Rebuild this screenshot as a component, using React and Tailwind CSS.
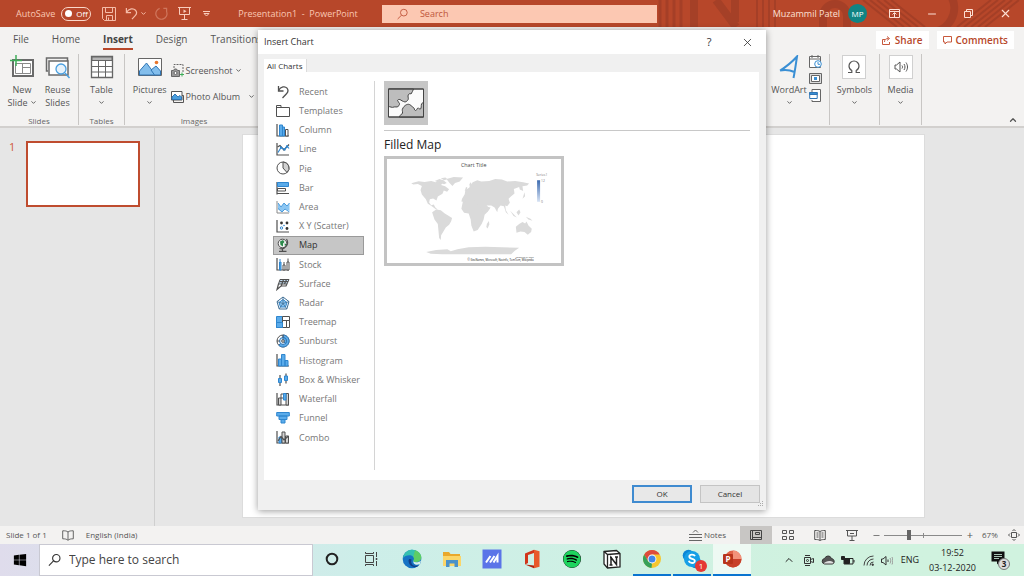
import { useState } from 'react';
import { FaWindows, FaSpotify } from 'react-icons/fa';
import { FiChevronDown, FiChevronUp, FiX, FiMinus } from 'react-icons/fi';

const BLUE = '#5aabea';
const DARK = '#505050';

// ---------- chart category icons ----------

function Svg({ size = 14, children, className = '', box = 14 }) {
  return (
    <svg
      width={size}
      height={size}
      viewBox={`0 0 ${box} ${box}`}
      fill="none"
      stroke={DARK}
      strokeWidth="1"
      className={`shrink-0 ${className}`}
      aria-hidden="true"
    >
      {children}
    </svg>
  );
}

const axis = <path d="M1 1v12h12" strokeWidth="1.200" />;

const chartTypes = [
  {
    name: 'Recent',
    icon: <path d="M2.500 1v5h5M2.500 5.500C5 1.500 9 .8 11 3.200c1.600 2 1 4-.5 5.600L6.500 13" strokeWidth="1.300" />,
  },
  {
    name: 'Templates',
    icon: <path d="M.5 12.500V1.500h4.500v2H13.500v9zM.5 3.500h4.500" />,
  },
  {
    name: 'Column',
    icon: (
      <>
        <path d="M1 1v12h12" strokeWidth="1.200" />
        <path d="M3.500 2h3V13h-3z" fill={BLUE} stroke="#2f86cf" />
        <path d="M6.500 4h2v9h-2z" fill={BLUE} stroke="#2f86cf" />
        <path d="M9.500 6.500h2.500V13H9.500z" fill="#fff" />
      </>
    ),
  },
  {
    name: 'Line',
    icon: (
      <>
        {axis}
        <path d="M1.500 5 4 3.500 8 8 13 2.500" strokeWidth="1.200" />
        <path d="M2 10.500 5 5.500 8.500 7.500 11 4 13 6.500" stroke="#2f86cf" strokeWidth="1.200" />
        <path d="M4 4.500h2v2H4zM7.500 6.500h2v2h-2zM10 3.500h2v2h-2z" fill="#2f86cf" stroke="none" />
      </>
    ),
  },
  {
    name: 'Pie',
    icon: (
      <>
        <circle cx="7" cy="7" r="6" fill="#fff" />
        <path d="M7 1v6l4 4.500A6 6 0 0 0 7 1z" fill="#d0d0d0" />
      </>
    ),
  },
  {
    name: 'Bar',
    icon: (
      <>
        <path d="M1 1v12.500" strokeWidth="1.200" />
        <path d="M1.500 1.500h11v4h-11z" fill={BLUE} stroke="#2f86cf" />
        <path d="M1.500 7.500h8v2.500h-8zM1 12.500H13" />
      </>
    ),
  },
  {
    name: 'Area',
    icon: (
      <>
        <path d="M2 3l3 4 3-4 3 3 2.500-3v8L9 9l-3 3-4-3z" fill="#8cc6f2" stroke="none" />
        <path d="M2 3l3 4 3-4 3 3 2.500-3M2 8.500l4 3.500 3-3 4.500 3" stroke="#4b9bdc" />
        <path d="M1 1v12h12" stroke="#8a8a8a" />
      </>
    ),
  },
  {
    name: 'X Y (Scatter)',
    icon: (
      <>
        {axis}
        <g fill="#333" stroke="none">
          <circle cx="5.500" cy="4" r="1.400" />
          <circle cx="11" cy="4" r="1.400" />
          <circle cx="11" cy="9.500" r="1.400" />
        </g>
        <circle cx="5.500" cy="9" r="1.200" stroke="#2f86cf" />
        <circle cx="8" cy="6.500" r=".8" fill="#2f86cf" stroke="none" />
      </>
    ),
  },
  {
    name: 'Map',
    icon: (
      <>
        <circle cx="6.500" cy="5.500" r="4.300" fill="#f4f4f4" />
        <path d="M4 3.500 7 2l1.500 2L7 5.500v3L4.500 7z" fill="#2b8a4b" stroke="none" />
        <path d="M8.500 5.500 10.500 6 9 8.500z" fill="#2b8a4b" stroke="none" />
        <path d="M10.500 1a6.300 6.300 0 0 1-7 9.500M6.500 11v2M3 13.300h7.500" strokeWidth="1.200" />
      </>
    ),
  },
  {
    name: 'Stock',
    icon: (
      <>
        {axis}
        <path d="M4 4.500V2M3.500 5H5v8H3.500z" fill={BLUE} stroke="#2f86cf" />
        <path d="M7 8h2v5H7zM8 8V5M11 5h2v8h-2zM12 5V1.500" fill="#fff" />
      </>
    ),
  },
  {
    name: 'Surface',
    icon: (
      <>
        <path d="M4 2.500h9l-2 4.500H2.500z" fill="#c4dff4" />
        <path d="M7.500 2.500 5 9.500M10.500 2.500l-2 4.500M3.500 4.700h8.500M2.500 7 1 12.500 5 9h5l1-2" strokeWidth="1.200" />
      </>
    ),
  },
  {
    name: 'Radar',
    icon: (
      <>
        <path d="M7 1l6 4.600L10.800 13H3.200L1 5.600z" fill="#fff" stroke="#3d6d94" />
        <path d="M7 3.500 11 6.500 9.500 11h-5L3 6.500z" fill="#8cc6f2" stroke="#2f86cf" />
        <path d="M7 1v6.500L13 5.600M7 7.500l3.800 5.500M7 7.500 3.200 13M7 7.500 1 5.600" stroke="#3d6d94" strokeWidth=".8" />
      </>
    ),
  },
  {
    name: 'Treemap',
    icon: (
      <>
        <path d="M.5 1.500h6v11h-6z" fill={BLUE} stroke="#2f86cf" />
        <path d="M6.500 1.500h7v4h-7zM6.500 5.500h4v7h-4zM10.500 5.500h3v7h-3z" fill="#fff" />
        <path d="M.5 7.500h6v5h-6z" fill={BLUE} stroke="#2f86cf" />
      </>
    ),
  },
  {
    name: 'Sunburst',
    icon: (
      <>
        <circle cx="7" cy="7" r="6" fill="#fff" />
        <path d="M7 1a6 6 0 1 1-4.200 10.200L7 7z" fill={BLUE} stroke="#2f75b5" />
        <circle cx="7" cy="7" r="3.500" fill="#cfe6f8" stroke="#2f75b5" />
        <path d="M7 3.500A3.500 3.500 0 0 1 9.500 9.500L7 7z" fill={BLUE} stroke="#2f75b5" />
        <circle cx="7" cy="7" r="1.300" fill="#fff" />
        <path d="M3.500 7H1M7 3.500V1" />
      </>
    ),
  },
  {
    name: 'Histogram',
    icon: (
      <>
        {axis}
        <path d="M2.500 6h3v7h-3zM5.500 1.500h3.500V13H5.500zM9 7.500h3V13H9z" fill={BLUE} stroke="#2f86cf" />
      </>
    ),
  },
  {
    name: 'Box & Whisker',
    icon: (
      <>
        <path d="M4 2v11M10 .5v10" strokeWidth="1.200" />
        <path d="M2.500 5.500h3v4h-3zM8.500 3h3v4.500h-3z" fill={BLUE} stroke="#2f86cf" />
      </>
    ),
  },
  {
    name: 'Waterfall',
    icon: (
      <>
        {axis}
        <path d="M2.500 6h2.500v7H2.500zM10 1.500h2.500V13H10z" fill="#d4d4d4" />
        <path d="M5 2h3v4H5z" />
        <path d="M7.500 1.500H10V8H7.500z" fill={BLUE} stroke="#2f86cf" />
      </>
    ),
  },
  {
    name: 'Funnel',
    icon: (
      <path
        d="M.7 1.500h12.600V5H.7zM3 5h8v3.500H3zM5 8.500h4V12H5z"
        fill={BLUE}
        stroke="#2f86cf"
      />
    ),
  },
  {
    name: 'Combo',
    icon: (
      <>
        {axis}
        <path d="M3 7h2.500v6H3z" fill={BLUE} stroke="#2f86cf" />
        <path d="M6 2h3v11H6zM9.500 6h3v7h-3z" fill="#d4d4d4" />
        <path d="M2 11 5 6.500 8 10l4.500-4" strokeWidth="1.200" />
      </>
    ),
  },
];

// ---------- title bar ----------

function TitlePattern() {
  return (
    <svg
      className="absolute inset-y-0 right-0 h-full w-[369px]"
      viewBox="0 0 369 27"
      preserveAspectRatio="none"
      fill="none"
      stroke="#983a25"
      aria-hidden="true"
    >
      <g strokeWidth="3" opacity=".55">
        <path d="M5 0v27M12 0v27M19 0v27M26 0v27" />
        <path d="M102 0v27M108 0v27M114 0v27M120 0v27" strokeWidth="2" />
      </g>
      <g strokeWidth="8" opacity=".55">
        <path d="M39 0v27M61 0l20 27M80 0v22" />
        <path d="M168 27V16a12 12 0 0 1 24 0v11" />
        <path d="M276 32a24 24 0 0 0 20-36" />
      </g>
      <g strokeWidth="2" opacity=".6">
        <path d="M208 0l34 27M215 0l34 27M222 0l34 27M229 0l34 27M236 0l34 27" />
        <path d="M302 27 336 0M309 27 343 0M316 27 350 0M323 27 357 0M330 27 364 0" />
      </g>
    </svg>
  );
}

function TitleBar() {
  const tool = 'flex items-center justify-center';
  return (
    <header className="relative grid h-[27px] grid-cols-[382fr_275fr_367fr] items-center bg-[#b7472a] text-[9px] text-[#fbc8b4]">
      <TitlePattern />
      <div className="relative flex items-center pl-4 whitespace-nowrap">
        <span id="autosave">AutoSave</span>
        <button
          role="switch"
          aria-checked="false"
          aria-labelledby="autosave"
          className="ml-1.5 flex h-[14px] w-[30px] items-center gap-1 rounded-full border border-[#fbd8ca] pl-[3px] text-[8px] text-white"
        >
          <span className="size-[7px] rounded-full bg-white" />
          Off
        </button>
        <button aria-label="Save" className={`${tool} ml-[11px]`}>
          <svg width="14" height="14" viewBox="0 0 14 14" fill="none" stroke="#f5bca8">
            <path d="M.5.500h13v13H2.500L.5 11.500zM3.500 1v4.500h7V1M4.500 13V8.500h6V13M6.500 10.500V13" />
          </svg>
        </button>
        <button aria-label="Undo" className={`${tool} ml-[9px]`}>
          <svg width="13" height="13" viewBox="0 0 14 14" fill="none" stroke="#f5bca8" strokeWidth="1.300">
            <path d="M1.500 1v5h5M1.500 5.800C4.500 1.500 9 1 11.300 3.500c1.800 2 1.200 4.200-.3 5.800L7.500 13" />
          </svg>
        </button>
        <FiChevronDown className="ml-0.5" size={7} strokeWidth={3} aria-hidden="true" />
        <button aria-label="Redo" className={`${tool} ml-2 opacity-40`}>
          <svg width="13" height="13" viewBox="0 0 14 14" fill="none" stroke="#f5bca8" strokeWidth="1.300">
            <path d="M9 1.500h3.500V5M12.500 5A6 6 0 1 1 5 1.500" />
          </svg>
        </button>
        <button aria-label="Start slide show" className={`${tool} ml-[10px]`}>
          <svg width="13" height="13" viewBox="0 0 13 13" fill="none" stroke="#f9cdbd">
            <path d="M0 .5h13M1.500 1v6.500h10V1M6.500 7.500V12M3.500 12.500h6" />
            <path d="M5.500 2.500v3.500l3-1.700z" fill="#f9cdbd" stroke="none" />
          </svg>
        </button>
        <button aria-label="Customize toolbar" className={`${tool} ml-3`}>
          <svg width="7" height="6" viewBox="0 0 7 6" fill="none" stroke="#f9cdbd">
            <path d="M0 .5h7M1 2.500h5L3.500 5z" />
          </svg>
        </button>
        <span className="ml-7">Presentation1 &nbsp;-&nbsp; PowerPoint</span>
      </div>
      <label className="relative flex h-[18px] items-center bg-[#fcc8b2] pl-[15px] text-[#c0563b]">
        <svg width="12" height="12" viewBox="0 0 12 12" fill="none" stroke="#c0563b">
          <circle cx="7.500" cy="4.500" r="3.700" />
          <path d="M5 7.300.7 11.500" />
        </svg>
        <input
          type="search"
          placeholder="Search"
          aria-label="Search"
          className="ml-3 w-full bg-transparent outline-none placeholder:text-[#c0563b]"
        />
      </label>
      <div className="relative flex items-center justify-end pr-3">
        <span className="text-[#fde0d5]">Muzammil Patel</span>
        <span className="ml-2 flex size-[19px] items-center justify-center rounded-full bg-[#108484] text-[8px] text-white">
          MP
        </span>
        <button aria-label="Ribbon display options" className="ml-[22px]">
          <svg width="11" height="9" viewBox="0 0 11 9" fill="none" stroke="#fde0d5">
            <path d="M.5.5h10v8H.5zM.5 2.500h10M5.500 8V4M3.500 5.500l2-2 2 2" />
          </svg>
        </button>
        <button aria-label="Minimize" className="ml-[26px] text-[#fde0d5]">
          <FiMinus size={12} />
        </button>
        <button aria-label="Restore" className="ml-[26px]">
          <svg width="9" height="9" viewBox="0 0 9 9" fill="none" stroke="#fde0d5">
            <path d="M.5 2.500h6v6h-6zM2.500 2.500v-2h6v6h-2" />
          </svg>
        </button>
        <button aria-label="Close" className="ml-[26px] text-[#fde0d5]">
          <FiX size={13} />
        </button>
      </div>
    </header>
  );
}

// ---------- ribbon ----------

function RibbonButton({ icon, lines, arrow }) {
  return (
    <button className="flex flex-col items-center text-[9px] leading-[13px]">
      <span className="mb-[3px] flex h-[26px] items-center">{icon}</span>
      {lines.map((line, i) => (
        <span key={line} className="flex items-center gap-0.5 whitespace-nowrap">
          {line}
          {arrow === 'inline' && i === lines.length - 1 && <FiChevronDown size={7} strokeWidth={3} />}
        </span>
      ))}
      {arrow === 'below' && <FiChevronDown className="mt-[3px]" size={7} strokeWidth={3} />}
    </button>
  );
}

function RibbonGroup({ label, children, className = '' }) {
  return (
    <section className={`relative flex h-[71px] flex-col border-r border-[#c8c6c4] ${className}`}>
      <div className="flex flex-1 items-start justify-center gap-2">{children}</div>
      {label && <h2 className="text-center text-[8px] leading-[8px] text-[#666]">{label}</h2>}
    </section>
  );
}

function Ribbon() {
  return (
    <div className="flex items-start justify-between border-b-2 border-[#d2d0ce] bg-[#f3f2f1] pt-px pb-px text-[#555]">
      <div className="flex">
        <RibbonGroup label="Slides" className="w-[79px]">
          <RibbonButton
            lines={['New', 'Slide']}
            arrow="inline"
            icon={
              <svg width="26" height="24" viewBox="0 0 26 24" fill="none" stroke="#6a6a6a">
                <path d="M4 5h20v16H4z" fill="#fff" strokeWidth="2" />
                <path d="M6.500 8.500h15v10h-15zM13.500 9v10M13.500 12.500H22" stroke="#8a8a8a" />
                <path d="M7 0v11M1 5.500h12" stroke="#3fae5a" strokeWidth="1.500" />
              </svg>
            }
          />
          <RibbonButton
            lines={['Reuse', 'Slides']}
            icon={
              <svg width="26" height="24" viewBox="0 0 26 24" fill="none" stroke="#6a6a6a">
                <path d="M3 16H1.500V3h21v3" strokeWidth="1.500" />
                <path d="M4 6h19v14H4z" fill="#fff" strokeWidth="1.500" />
                <circle cx="16" cy="14" r="5" fill="#e6f2fb" stroke="#4a9fdf" strokeWidth="1.300" />
                <path d="m20 18 4.500 5" stroke="#4a9fdf" strokeWidth="1.500" />
              </svg>
            }
          />
        </RibbonGroup>
        <RibbonGroup label="Tables" className="w-[46px]">
          <RibbonButton
            lines={['Table']}
            arrow="below"
            icon={
              <svg width="24" height="24" viewBox="0 0 24 24" fill="none" stroke="#666">
                <path d="M1.500 1.500h21v21h-21z" fill="#fff" strokeWidth="1.300" />
                <path d="M2 2h20v3.500H2z" fill="#b5b5b5" />
                <path d="M1.500 11.500h21M1.500 17h21M8.500 5v17.500M15.500 5v17.500" />
              </svg>
            }
          />
        </RibbonGroup>
        <RibbonGroup label="Images" className="w-[139px]">
          <RibbonButton
            lines={['Pictures']}
            arrow="below"
            icon={
              <svg width="24" height="20" viewBox="0 0 24 20" fill="none" stroke="#666">
                <path d="M.5 1.500h23v17H.5z" fill="#fff" />
                <path d="M1.500 14 8.500 6l9 12h-16z" fill="#83beec" stroke="#2f75b5" />
                <path d="m13 13 5-4 4.500 5v4h-6z" fill="#83beec" stroke="#2f75b5" />
                <circle cx="18.500" cy="5.500" r="1.800" fill="#e8762c" stroke="none" />
              </svg>
            }
          />
          <div className="-ml-1 flex flex-col gap-[13px] pt-[10px] text-[9px] leading-[13px]">
            <button className="flex items-center gap-0.5 whitespace-nowrap">
              <svg width="13" height="13" viewBox="0 0 13 13" fill="none" stroke="#666">
                <path d="M3 4V.5h9V8" strokeDasharray="2 1" />
                <path d="M.5 6.500h2l1-1.500h2l1 1.500h2v6h-8z" fill="#999" />
                <circle cx="4.500" cy="9" r="1.500" fill="#fff" />
                <path d="M11 8.500v4M9 10.500h4" stroke="#3fae5a" />
              </svg>
              Screenshot
              <FiChevronDown size={7} strokeWidth={3} />
            </button>
            <button className="flex items-center gap-0.5 whitespace-nowrap">
              <svg width="13" height="12" viewBox="0 0 13 12" fill="none" stroke="#555">
                <path d="M2.500 9v2.500h10v-7H11" />
                <path d="M.5.5h10.500v8.500H.5z" fill="#fff" />
                <path d="m1 6 3-3 3 3 2-1.500 1.500 1.500v2.500H1z" fill="#4a9fdf" stroke="#2f75b5" />
              </svg>
              Photo Album
              <FiChevronDown className="ml-1.5" size={7} strokeWidth={3} />
            </button>
          </div>
        </RibbonGroup>
      </div>

      <div className="flex flex-1 justify-end">
        <RibbonGroup className="w-[66px]">
          <RibbonButton
            lines={['WordArt']}
            arrow="below"
            icon={
              <svg width="20" height="24" viewBox="0 0 20 24" fill="none" stroke="#3a8fd4" strokeWidth="2">
                <path d="M1 15.500C7 12 13 7 18 1.500 17 8 16 16 14.500 23M1 15.500c5-1 10-.5 14.500 1.500" />
              </svg>
            }
          />
          <div className="-ml-1.5 flex flex-col gap-[5px] pt-px">
            <button aria-label="Date and time">
              <svg width="13" height="13" viewBox="0 0 13 13" fill="none" stroke="#666">
                <path d="M.5 1.500h11v11H.5zM.5 4h11M3 0v3M9 0v3" fill="#fff" />
                <circle cx="9" cy="9" r="3.300" fill="#fff" stroke="#3a8fd4" />
                <path d="M9 7v2.300h2" stroke="#3a8fd4" />
              </svg>
            </button>
            <button aria-label="Slide number">
              <svg width="13" height="11" viewBox="0 0 13 11" fill="none" stroke="#666">
                <path d="M.5.5h12v10H.5z" fill="#ddd" />
                <path d="M2.500 2.500h8v6h-8z" fill="#fff" />
                <path d="M5 4h3v3H5z" fill="#3a8fd4" stroke="none" />
              </svg>
            </button>
            <button aria-label="Object">
              <svg width="13" height="13" viewBox="0 0 13 13" fill="none" stroke="#666">
                <path d="M3 3V.5h8.500v12H3V11" fill="#fff" />
                <path d="M.7 3.500h7.500v6H.7z" fill="#fff" stroke="#2f75b5" />
                <path d="M.7 3.500h7.500v2H.7z" fill="#3a8fd4" stroke="#2f75b5" />
              </svg>
            </button>
          </div>
        </RibbonGroup>
        <RibbonGroup className="w-[50px]">
          <RibbonButton
            lines={['Symbols']}
            arrow="below"
            icon={
              <span className="flex size-[24px] items-center justify-center border border-[#d0d0d0] bg-white">
                <svg width="14" height="14" viewBox="0 0 14 14" fill="none" stroke="#555" strokeWidth="1.200">
                  <path d="M1 12.500h3.800v-2C2.800 9.500 2 8 2 6a5 5 0 0 1 10 0c0 2-.8 3.500-2.800 4.500v2H13" />
                </svg>
              </span>
            }
          />
        </RibbonGroup>
        <RibbonGroup className="w-[42px]">
          <RibbonButton
            lines={['Media']}
            arrow="below"
            icon={
              <span className="flex size-[24px] items-center justify-center border border-[#d0d0d0] bg-white">
                <svg width="14" height="12" viewBox="0 0 14 12" fill="none" stroke="#555">
                  <path d="M1 4v4h1.500l3.500 3V1L2.500 4z" />
                  <path d="M8 4.500c.7 1 .7 2 0 3M10 3c1.300 2 1.300 4 0 6M12 1.500c2 3 2 6 0 9" />
                </svg>
              </span>
            }
          />
        </RibbonGroup>
        <button aria-label="Collapse the ribbon" className="ml-[86px] self-end pr-1.5">
          <FiChevronUp size={10} strokeWidth={3} />
        </button>
      </div>
    </div>
  );
}

function TabRow() {
  const tabs = ['File', 'Home', 'Insert', 'Design', 'Transitions'];
  const action = 'flex h-[18px] items-center gap-1 bg-white px-1.5 text-[10px] font-semibold text-[#b7472a]';
  return (
    <nav className="flex h-[26px] items-center justify-between bg-[#f3f2f1] pr-[10px] pl-[13px] text-[10px] text-[#555]">
      <div className="flex gap-[23px]">
        {tabs.map((tab) => (
          <a
            key={tab}
            href={`#${tab.toLowerCase()}`}
            className={
              tab === 'Insert'
                ? 'border-b-2 border-[#b7472a] leading-[17px] font-bold text-[#444]'
                : 'border-b-2 border-transparent leading-[17px]'
            }
          >
            {tab}
          </a>
        ))}
      </div>
      <div className="flex gap-2">
        <button className={action}>
          <svg width="9" height="9" viewBox="0 0 9 9" fill="none" stroke="#c8593d">
            <path d="M3 3.500H.5v5h7V6M2.500 6c0-2.500 1.500-3.500 4-3.500M5 .5l2.500 2L5 4.500" />
          </svg>
          Share
        </button>
        <button className={action}>
          <svg width="9" height="9" viewBox="0 0 9 9" fill="none" stroke="#c8593d">
            <path d="M.5.500h8v5.500H4L2 8V6H.5z" />
          </svg>
          Comments
        </button>
      </div>
    </nav>
  );
}

// ---------- dialog ----------

function MapPreview() {
  return (
    <svg viewBox="34 252 524 314" className="block w-full" aria-label="Filled map preview" role="img">
      <g fill="#dadada">
        <path d="M107 325l22-6 18 2 20-3 14 4 8-5 14 5-6 8 12 4 12 9-6 8-10-4-4 10-14 8-4 12-10-6-10 2-2 10 6 8 8-2 4 8 8 8-6-2-14-10-10-6-6-14-12-14-4-14 4-12-12-6-14 2z" />
        <path d="M178 318l14-6 12 4 10 8-8 4-12-4zM196 310l14-2 6 5-10 3zM213 312l22-6 28 2-10 12-14 4-8 9-8-8z" />
        <path d="M170 412l12-8 14 2 12 10 10 6 12 8-3 10-6 10-10 8-8 14-6 10-1 14-5-6-2-22-2-20-10-14-4-12z" />
        <path d="M262 382l8-12 18-2 16 4 14 2 10 14 4 8 14 2-8 12-10 10-3 14-6 14-12 18-12 4-7-18-2-18-6-18-14-2-8-12z" />
        <path d="M335 447l6-8 1 10-5 12-4-4z" />
        <path d="M268 358l2-12 12-8 10-16 14-6 12 4 24-2 18-6 20 2 16 6 24-2 24 4 18 4-6 6-14 2 2 14-10-4-2-8-16 6 2 14-10 8-8 8 4 12-8 10-6-2 2 14 8 14-8-8-6-18-10-2-8 10-2 10-8-14-10-6-14 0 10 8-8 10-12 6-10-18-8-10-16 2-2-8 12-4-10-8-14 4-8 8-10-2 2-8z" />
        <path d="M282 328l4-6 4 8-6 10zM272 336l4 2-2 8-6 2zM448 352l2 12-8 8 2-6z" />
        <path d="M405 408l12 12 8 8-10-4zM424 412l8-8 4 8-6 10zM452 426l14 6 6 6-12-4z" />
        <path d="M422 456l10-8 10-6 8 4 4-6 6 12 10 10-2 10-10 8-10-8-12-2-12 4z" />
        <path d="M152 532l30-6 34-2 10 6 20-6 34-6 50-2 50 2 52 1-14 10-10 10H200l-34-2z" />
      </g>
      <text x="295" y="275" textAnchor="middle" fontSize="16" fill="#444">Chart Title</text>
      <text x="500" y="302" textAnchor="middle" fontSize="10" fill="#777">Series1</text>
      <defs>
        <linearGradient id="scale" x1="0" y1="0" x2="0" y2="1">
          <stop offset="0" stopColor="#3c6bb0" />
          <stop offset="1" stopColor="#d9e4f4" />
        </linearGradient>
      </defs>
      <rect x="486" y="316" width="9" height="65" fill="url(#scale)" />
      <text x="498" y="322" fontSize="10" fill="#777">12</text>
      <text x="498" y="385" fontSize="10" fill="#777">0</text>
      <text x="476" y="551" textAnchor="end" fontSize="7" fill="#444">Powered by Bing</text>
      <text x="476" y="558" textAnchor="end" fontSize="8" fill="#222">
        © GeoNames, Microsoft, Navinfo, TomTom, Wikipedia
      </text>
    </svg>
  );
}

function InsertChartDialog() {
  const [selected, setSelected] = useState('Map');

  return (
    <div
      role="dialog"
      aria-labelledby="dialog-title"
      className="flex h-[480px] w-[508px] flex-col bg-[#f0f0f0] text-[#333] shadow-[0_1px_7px_rgba(0,0,0,0.4)]"
    >
      <div className="flex h-[24px] items-center bg-white pl-1.5">
        <h1 id="dialog-title" className="flex-1 text-[9px]">Insert Chart</h1>
        <button aria-label="Help" className="w-[38px] text-[11px]">?</button>
        <button aria-label="Close dialog" className="flex w-[38px] justify-center">
          <FiX size={13} strokeWidth={1.5} />
        </button>
      </div>
      <div className="flex h-[18px] items-end pl-1.5" role="tablist">
        <button
          role="tab"
          aria-selected="true"
          className="h-[13px] border-r border-[#dcdcdc] bg-white px-[3px] text-[8px] leading-[13px]"
        >
          All Charts
        </button>
      </div>
      <div className="mr-[7px] ml-1.5 flex flex-1 bg-white pt-[9px] pb-[10px]">
        <ul className="flex w-[111px] flex-col border-r border-[#d4d4d4] pt-px pr-[10px] pb-[23px] pl-[9px]">
          {chartTypes.map(({ name, icon }) => (
            <li key={name} className="flex flex-1">
              <button
                onClick={() => setSelected(name)}
                className={`flex w-full items-center gap-[9px] border pl-[2px] text-left text-[9px] whitespace-nowrap ${
                  selected === name
                    ? 'border-[#9a9a9a] bg-[#c6c6c6] text-[#333]'
                    : 'border-transparent text-[#777]'
                }`}
              >
                <Svg>{icon}</Svg>
                {name}
              </button>
            </li>
          ))}
        </ul>
        <div className="flex-1 pr-[9px] pl-[9px]">
          <div className="border-b border-[#c8c8c8] pb-[5px]">
            <button aria-label="Filled Map" className="flex size-[44px] items-center justify-center bg-[#c6c6c6]">
              <svg width="36" height="30" viewBox="0 0 36 30" stroke="#444" strokeWidth="1">
                <path d="M.5 1h35v28H.5z" fill="#fbfbfb" />
                <path
                  d="M.5 1H25.500C25 3 24 4 23 6c-1-1-3 0-3 2 0 1.500 1 3-.5 4.500-1 1-2 2-4 1-2-.5-3-2.500-5-2-1.500.5-1 2 .5 3 1 1 .5 3-1 4-1 1-3 0-4 .5C4 20 2 18.500.5 18.500z"
                  fill="#bdbdbd"
                />
                <path
                  d="M11.500 29c-.5-2 2.500-2 3-4 .3-2-1-3 .5-5 1-2 4-4.500 6.500-3.500 2 .5 2 2.500 4 3 1 .5.5 2.500 2 3 1.500 0 1-2 2.500-2.500 1-.5 1 1.500 2.500 1 1-1 .5-3 1-5 .5-1 1.500-1 2-2v15z"
                  fill="#bdbdbd"
                />
                <path d="M.5 1h35v28H.5z" fill="none" />
              </svg>
            </button>
          </div>
          <h2 className="pt-1 pb-px text-[12px] leading-[20px] text-[#222]">Filled Map</h2>
          <div className="w-[180px] border-3 border-[#c3c3c3]">
            <MapPreview />
          </div>
        </div>
      </div>
      <div className="relative flex h-[30px] items-center justify-end gap-2 pr-1.5 pb-0.5 text-[8px]">
        <button className="h-[18px] w-[60px] border-2 border-[#3f8bd0] bg-[#e8e8e8]">OK</button>
        <button className="h-[18px] w-[60px] border border-[#c4c4c4] bg-[#e4e4e4]">Cancel</button>
        <svg className="absolute right-0.5 bottom-0.5" width="7" height="7" viewBox="0 0 7 7" fill="#aaa" aria-hidden="true">
          <path d="M5 0h1v1H5zM3 2h1v1H3zM5 2h1v1H5zM1 4h1v1H1zM3 4h1v1H3zM5 4h1v1H5z" />
        </svg>
      </div>
    </div>
  );
}

// ---------- workspace and bars ----------

function Workspace() {
  return (
    <main className="flex flex-1 bg-[#e6e6e6]">
      <aside className="flex w-[155px] items-start gap-[11px] border-r border-[#cfcfcf] pt-[13px] pl-[9px] text-[11px] leading-[12px] text-[#d0583a]">
        1
        <button aria-label="Slide 1" className="h-[66px] w-[114px] border-2 border-[#bf4c2f] bg-white" />
      </aside>
      <div className="flex flex-1 pt-1.5 pr-[99px] pb-2 pl-[87px]">
        <div className="flex-1 border border-[#dcdcdc] bg-white" />
      </div>
    </main>
  );
}

function StatusBar() {
  const [zoom, setZoom] = useState(67);
  return (
    <footer className="flex h-[18px] items-center bg-[#f3f2f1] pr-1 pl-1.5 text-[8px] text-[#555]">
      <span>Slide 1 of 1</span>
      <svg className="ml-[15px]" width="12" height="11" viewBox="0 0 12 11" fill="none" stroke="#666">
        <path d="M6 2C4.500.8 3 .8.7.8v8C3 8.800 4.500 9 6 10.300 7.500 9 9 8.800 11.300 8.800v-8C9 .8 7.500.8 6 2zM6 2v8" />
      </svg>
      <span className="ml-3">English (India)</span>
      <div className="ml-auto flex h-full items-center">
        <button className="mr-[14px] flex items-center gap-0.5">
          <svg width="13" height="12" viewBox="0 0 13 12" fill="none" stroke="#666">
            <path d="M4 3.500 6.500 1 9 3.500M0 5.500h13M0 8.500h13M0 11.500h13" />
          </svg>
          Notes
        </button>
        <button aria-label="Normal" className="flex h-full w-[32px] items-center justify-center bg-[#c8c6c4]">
          <svg width="12" height="10" viewBox="0 0 12 10" fill="none" stroke="#444">
            <path d="M.5.5h11v9H.5zM2.500.5v9M3 7.500h8.500M5.500 2.500h4v2h-4z" />
          </svg>
        </button>
        <button aria-label="Slide sorter" className="flex w-[32px] justify-center">
          <svg width="12" height="10" viewBox="0 0 12 10" fill="none" stroke="#555">
            <path d="M.5.5h4v3h-4zM7.500.5h4v3h-4zM.5 6.500h4v3h-4zM7.500 6.500h4v3h-4z" />
          </svg>
        </button>
        <button aria-label="Reading view" className="flex w-[32px] justify-center">
          <svg width="12" height="11" viewBox="0 0 12 11" fill="none" stroke="#555">
            <path d="M6 1.500C4.500.5 3 .5.7.5v9C3 9.500 4.500 9.500 6 10.500 7.500 9.500 9 9.500 11.300 9.500v-9C9 .5 7.500.5 6 1.500zM6 1.500v9M2.500 3h2M2.500 5h2M2.500 7h2M7.500 3h2M7.500 5h2M7.500 7h2" />
          </svg>
        </button>
        <button aria-label="Slide show" className="flex w-[32px] justify-center">
          <svg width="12" height="11" viewBox="0 0 12 11" fill="none" stroke="#555">
            <path d="M0 .5h12M1.500.5v5.500h9V.5M6 6v4M3.500 10.500h5M4 3.500h4" />
          </svg>
        </button>
        <button aria-label="Zoom out" className="flex w-4 justify-center"><FiMinus size={9} /></button>
        <label className="relative flex h-[10px] w-[78px] items-center">
          <span className="h-px w-full bg-[#8a8a8a]" />
          <span className="absolute left-1/2 h-[5px] w-px bg-[#8a8a8a]" />
          <input
            type="range"
            aria-label="Zoom"
            min="10"
            max="190"
            value={zoom}
            onChange={(e) => setZoom(Number(e.target.value))}
            className="absolute inset-0 w-full appearance-none bg-transparent [&::-webkit-slider-thumb]:h-[10px] [&::-webkit-slider-thumb]:w-1 [&::-webkit-slider-thumb]:appearance-none [&::-webkit-slider-thumb]:bg-[#666]"
          />
        </label>
        <button aria-label="Zoom in" className="flex w-4 justify-center text-[11px]">+</button>
        <span className="ml-1 w-[26px]">{zoom}%</span>
        <button aria-label="Fit slide to window">
          <svg width="12" height="12" viewBox="0 0 12 12" fill="none" stroke="#555">
            <path d="M3.500 3.500h5v5h-5zM4.500 2 6 .5 7.500 2M4.500 10 6 11.500 7.500 10M2 4.500.5 6 2 7.500M10 4.500 11.500 6 10 7.500" />
          </svg>
        </button>
      </div>
    </footer>
  );
}

const apps = [
  {
    name: 'Cortana',
    icon: <circle cx="10" cy="10" r="5.300" fill="none" stroke="#222" strokeWidth="2" />,
  },
  {
    name: 'Task view',
    icon: (
      <path
        d="M3.500 6.500h8v7h-8zM3.500 3v1.500h8V3M3.500 17v-1.500h8V17M14.500 3v5M14.500 12v5M14 9.500h1v1h-1z"
        fill="none"
        stroke="#444"
      />
    ),
  },
  {
    name: 'Microsoft Edge',
    icon: (
      <>
        <circle cx="10" cy="10" r="9.300" fill="#1673c4" />
        <path d="M1 9C2 3 6 .7 10.500.7c5 0 8.800 3.800 8.800 7.600 0 3.500-3 4.700-5.500 4.700-2 0-2.800-.8-2.300-1.600C13 9 11 6.300 7.500 6.300 4.500 6.300 2 7.500 1 9z" fill="#35c1b1" />
        <path d="M13 1.200c4 1.300 6.300 4.300 6.300 7.100 0 3.500-3 4.700-5.500 4.700-2 0-2.800-.8-2.300-1.600.8-1.300.6-2.700-.2-3.700z" fill="#6cd04c" opacity=".75" />
        <path d="M6.500 11.500c0 4 3.500 7.300 8 6.500 1-.2 2-1 2.600-1.700-5 1.700-9-.5-7.600-5.800-1.500-1-3-.5-3 1z" fill="#123f87" />
        <path d="M11.400 11.200c-.7.800.2 2 2.600 2 2.500 0 4-.8 5-1.800L18 15c-3.500 1.500-7.500.5-6.600-3.800z" fill="#d7f0ea" />
      </>
    ),
  },
  {
    name: 'File Explorer',
    icon: (
      <>
        <path d="M1 3h6l1.500 2H18v12H1z" fill="#e9a82c" />
        <path d="M1 7h18v10H1z" fill="#fbd669" />
        <path d="M4 11h12v7h-3.500v-3.500h-5V18H4z" fill="#4b92c9" />
      </>
    ),
  },
  {
    name: 'Meeting app',
    icon: (
      <>
        <path d="M.5.5h19v19H.5z" fill="#5b74e8" />
        <path d="M4 13.500 8.500 7M8 13.500 12.500 7M11.500 13.500 15.500 7v6.500" fill="none" stroke="#fff" strokeWidth="2" />
      </>
    ),
  },
  {
    name: 'Office',
    icon: (
      <>
        <path d="M12 .7 17.500 2.300v15.400L12 19.300z" fill="#e8592b" />
        <path d="M12 .7 3 4.500v11l3-1.500V6l6-2z" fill="#d1351b" />
        <path d="M3 15.500 12 19.300V16.500z" fill="#b3230f" />
      </>
    ),
  },
  { name: 'Spotify', spotify: true },
  {
    name: 'Notion',
    icon: (
      <>
        <path d="M2 2.500 14.500 1.500 18 4.500V18L5.500 19 2 15z" fill="#fff" stroke="#222" strokeWidth="1.300" />
        <path d="M2 2.500 5.500 5.500 18 4.500M5.500 5.500V19" fill="none" stroke="#222" strokeWidth="1.300" />
        <path d="M9 16V8.500l5.500 7V8M8 8.500h2M7.500 16h3M13 8h3" fill="none" stroke="#222" strokeWidth="1.500" />
      </>
    ),
  },
  {
    name: 'Google Chrome',
    open: true,
    icon: (
      <>
        <circle cx="10" cy="10" r="9" fill="#f6c62f" />
        <path d="M2.200 5.500A9 9 0 0 1 17.800 5.500H10L6.100 12.300z" fill="#dd4b3e" />
        <path d="M2.200 5.500 6.100 12.300 10 14.500 9.500 19A9 9 0 0 1 2.200 5.500z" fill="#36a05a" />
        <circle cx="10" cy="10" r="4.400" fill="#fff" />
        <circle cx="10" cy="10" r="3.500" fill="#4285e8" />
      </>
    ),
  },
  {
    name: 'Skype',
    open: true,
    badge: '1',
    icon: (
      <>
        <circle cx="6.500" cy="6.500" r="5.800" fill="#0b86d6" />
        <circle cx="13.500" cy="13.500" r="5.800" fill="#0b86d6" />
        <circle cx="10" cy="10" r="8" fill="#169fe6" />
        <path d="M13 7.200C12 5 7.500 5 7.300 7.500c-.2 3 5.600 1.800 5.500 4.500-.2 2.700-5 2.700-6-.2" fill="none" stroke="#fff" strokeWidth="1.800" />
      </>
    ),
  },
  {
    name: 'PowerPoint',
    open: true,
    active: true,
    icon: (
      <>
        <circle cx="11" cy="10" r="8.500" fill="#e0644a" />
        <path d="M11 1.500a8.500 8.500 0 0 1 8.500 8.500H11z" fill="#f2927a" />
        <path d="M2.500 10h17A8.500 8.500 0 0 1 2.500 10z" fill="#c8402a" />
        <rect x="1" y="5" width="10" height="10" rx="1" fill="#b8341c" />
        <text x="6" y="13" textAnchor="middle" fontSize="8" fontWeight="bold" fill="#fff">P</text>
      </>
    ),
  },
];

function AppButton({ app }) {
  return (
    <button
      aria-label={app.name}
      className={`relative flex h-full w-[38px] items-center justify-center ${app.active ? 'bg-[#eef9f3]' : ''} ${
        app.open ? 'border-b-2 border-[#0a74d0]' : 'border-b-2 border-transparent'
      }`}
    >
      {app.spotify ? (
        <FaSpotify size={18} className="rounded-full bg-black text-[#1ed35e]" />
      ) : (
        <svg width="20" height="20" viewBox="0 0 20 20">{app.icon}</svg>
      )}
      {app.badge && (
        <span className="absolute right-1 bottom-0.5 flex size-[12px] items-center justify-center rounded-full bg-[#e53935] text-[8px] text-white">
          {app.badge}
        </span>
      )}
    </button>
  );
}

function Taskbar() {
  return (
    <div className="flex h-[32px] items-center bg-linear-to-r from-[#dfdcec] from-0% via-[#cdeee9] via-35% to-[#d0f2df] to-80% text-[#222]">
      <button aria-label="Start" className="flex w-[39px] justify-center">
        <FaWindows size={14} className="text-black" />
      </button>
      <label className="flex h-full w-[274px] items-center border border-[#c9c9d2] bg-white pl-2">
        <svg width="14" height="14" viewBox="0 0 14 14" fill="none" stroke="#333" strokeWidth="1.200">
          <circle cx="9" cy="5" r="4" />
          <path d="M6 8 1 13" />
        </svg>
        <input
          type="search"
          aria-label="Type here to search"
          placeholder="Type here to search"
          className="ml-2 w-full bg-transparent text-[12px] outline-none placeholder:text-[#444]"
        />
      </label>
      <div className="flex h-full gap-0.5">
        {apps.map((app) => (
          <AppButton key={app.name} app={app} />
        ))}
      </div>
      <div className="ml-auto flex items-center pr-[15px] text-[9px]">
        <FiChevronUp size={12} />
        <svg className="ml-2" width="12" height="13" viewBox="0 0 12 13" fill="none" stroke="#333">
          <path d="M1.500 3.500h6v6h-6zM7.500 5.500 10.500 4.500v4L7.500 7.500M2 1.500h5M2 11.500h5" />
          <circle cx="4.500" cy="6.500" r="1" />
        </svg>
        <svg className="ml-1.5" width="14" height="10" viewBox="0 0 14 10" stroke="#333">
          <path d="M3.500 9a2.800 2.800 0 0 1 0-5.500C5 .5 9 0 10.500 3.500 14 4 14 9 11 9z" fill="#555" />
          <path d="M2.500 8.500C5 6 9 5 12.500 7.500l-1 1z" fill="#ddd" stroke="none" />
        </svg>
        <svg className="ml-1.5" width="14" height="9" viewBox="0 0 14 9" fill="none" stroke="#222">
          <path d="M3 2.500h9v5.500H3zM13 4v2.500" />
          <path d="M3.500 2.500h5v5h-5zM.5.500h3v3h-3z" fill="#222" />
        </svg>
        <svg className="ml-2" width="11" height="11" viewBox="0 0 11 11" fill="none" stroke="#444">
          <path d="M1 10.500A9.500 9.500 0 0 1 10.500 1M4 10.500A6.500 6.500 0 0 1 10.500 4M7 10.500A3.500 3.500 0 0 1 10.500 7" />
          <circle cx="9.700" cy="9.700" r=".8" fill="#222" />
        </svg>
        <svg className="ml-[7px]" width="12" height="11" viewBox="0 0 12 11" fill="none" stroke="#333">
          <path d="M.5 4v3.500H2l3 2.500V1.500L2 4zM7 4.500v2.500" />
          <path d="M9 3c1 1.500 1 4 0 5.500M11 2c1 2 1 5.500 0 7.500" stroke="#999" />
        </svg>
        <span className="ml-2">ENG</span>
        <span className="ml-[10px] text-center text-[9px] leading-[15px]">
          19:52
          <br />
          03-12-2020
        </span>
        <button aria-label="Notifications" className="relative ml-[15px] pr-1 pb-1">
          <svg width="14" height="14" viewBox="0 0 14 14" fill="#111">
            <path d="M.5.5h13v10H9l-3 3v-3H.5z" />
            <path d="M3 3.500h8M3 5.500h8M3 7.500h5" stroke="#d0f2df" strokeWidth=".8" />
          </svg>
          <span className="absolute -right-px -bottom-px flex size-[12px] items-center justify-center rounded-full border border-[#777] bg-[#ddd] text-[8px] font-bold">
            3
          </span>
        </button>
      </div>
    </div>
  );
}

export default function App() {
  return (
    <div className="relative flex min-h-screen flex-col font-['Open_Sans','Noto_Sans',sans-serif]">
      <TitleBar />
      <TabRow />
      <Ribbon />
      <Workspace />
      <StatusBar />
      <Taskbar />
      <div className="absolute inset-x-0 top-[30px] flex justify-center">
        <InsertChartDialog />
      </div>
    </div>
  );
}
